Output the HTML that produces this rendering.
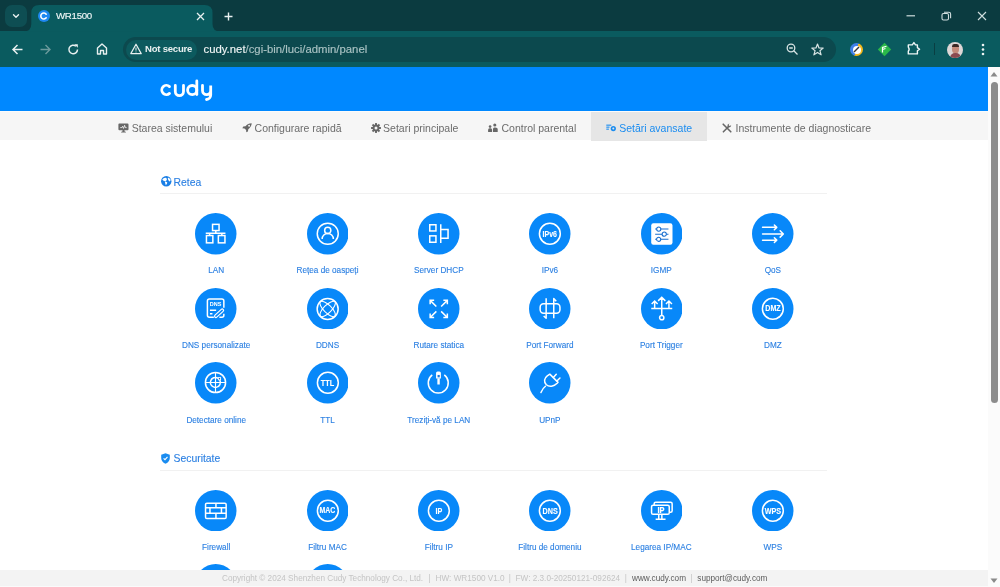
<!DOCTYPE html>
<html><head><meta charset="utf-8">
<style>
*{margin:0;padding:0;box-sizing:border-box}
html,body{width:1000px;height:587px;overflow:hidden;background:#fff;font-family:"Liberation Sans",sans-serif}
.a{position:absolute}
#titlebar{left:0;top:0;width:1000px;height:31px;background:#0b3b40}
#toolbar{left:0;top:31px;width:1000px;height:36px;background:#0a5b5f}
#tabbtn{left:5px;top:5px;width:22px;height:22px;border-radius:7px;background:#0e4e53}
#tab{left:31px;top:5px;width:182px;height:27px;background:#0e5a5e;border-radius:8px 8px 0 0}
.tt{color:#eef5f5;font-size:9.7px;letter-spacing:-0.3px;-webkit-text-stroke:0.15px #eef5f5;white-space:nowrap}
#omni{left:123px;top:36.5px;width:713px;height:25.5px;border-radius:13px;background:#0c494e}
#chip{left:126px;top:39.5px;width:71px;height:20px;border-radius:10px;background:#0c5a5e}
#header{left:0;top:67px;width:988px;height:44px;background:#0088ff}
#nav{left:0;top:111px;width:988px;height:29px;background:#f6f6f6;border-top:1px solid #fbfbfb}
#active{left:591px;top:112px;width:116px;height:28.5px;background:#e6e6e6}
.nt{font-size:10.5px;color:#6c6c6c;white-space:nowrap;line-height:12px}
#scroll{left:988px;top:67px;width:12px;height:520px;background:#fbfbfb}
#thumb{left:991px;top:82px;width:7px;height:321px;border-radius:4px;background:#8c8c8c}
#footer{left:0;top:570px;width:988px;height:17px;background:#f3f3f3;border-bottom:1px solid #fafafa}
.ft{font-size:8.2px;color:#c4c4c4;white-space:nowrap;line-height:10px}
.sec{font-size:10.4px;color:#2d80e2;-webkit-text-stroke:0.12px #2d80e2;white-space:nowrap;line-height:12px}
.line{height:1px;background:#f1f1f1}
.c{width:41.5px;height:41.5px;border-radius:50%;background:#1a8cf5}
.c svg{position:absolute;left:0;top:0;width:41.5px;height:41.5px}
.lb{font-size:8.2px;color:#2d80e2;-webkit-text-stroke:0.12px #2d80e2;white-space:nowrap;line-height:10px;width:120px;text-align:center}
</style></head><body><div id="root" style="position:absolute;left:0;top:0;width:1000px;height:587px;will-change:transform">
<div class="a" id="titlebar"></div>
<div class="a" id="tabbtn"></div>
<svg class="a" style="left:11px;top:11px" width="10" height="10" viewBox="0 0 10 10"><path d="M2.5 3.8 L5 6.3 L7.5 3.8" stroke="#e8f0f0" stroke-width="1.4" fill="none" stroke-linecap="round" stroke-linejoin="round"/></svg>
<div class="a" id="toolbar"></div>
<svg class="a" style="left:0;top:0" width="240" height="32" viewBox="0 0 240 32"><path d="M23.5 31.5 Q31.3 31.5 31.3 24 V13 Q31.3 5 39.3 5 H204.5 Q212.5 5 212.5 13 V24 Q212.5 31.5 220.3 31.5 Z" fill="#0a5b5f"/></svg>
<!-- favicon -->
<div class="a" style="left:38px;top:10px;width:12px;height:12px;border-radius:50%;background:#1e88f0"></div>
<svg class="a" style="left:38px;top:10px" width="12" height="12" viewBox="0 0 12 12"><path d="M8.2 4.2 A3 3 0 1 0 8.2 7.8" stroke="#fff" stroke-width="1.6" fill="none" stroke-linecap="round"/></svg>
<div class="a tt" style="left:56px;top:9.6px;line-height:12px">WR1500</div>
<svg class="a" style="left:196px;top:12px" width="9" height="9" viewBox="0 0 9 9"><path d="M1 1 L8 8 M8 1 L1 8" stroke="#e8f0f0" stroke-width="1.3"/></svg>
<svg class="a" style="left:224px;top:12px" width="9" height="9" viewBox="0 0 9 9"><path d="M4.5 0.5 V8.5 M0.5 4.5 H8.5" stroke="#e8f0f0" stroke-width="1.4"/></svg>
<!-- window controls -->
<svg class="a" style="left:906px;top:11px" width="10" height="10" viewBox="0 0 10 10"><path d="M0.5 4.8 H9" stroke="#d0dede" stroke-width="1.2"/></svg>
<svg class="a" style="left:941px;top:11px" width="11" height="10" viewBox="0 0 11 10"><rect x="1" y="2.5" width="6.5" height="6.5" rx="1.5" stroke="#d0dede" stroke-width="1.1" fill="none"/><path d="M3 1.2 H7.8 Q9.6 1.2 9.6 3 V7.2" stroke="#d0dede" stroke-width="1.1" fill="none"/></svg>
<svg class="a" style="left:977px;top:11px" width="10" height="10" viewBox="0 0 10 10"><path d="M1 1 L9 9 M9 1 L1 9" stroke="#d0dede" stroke-width="1.1"/></svg>
<!-- toolbar icons -->
<svg class="a" style="left:11px;top:43px" width="13" height="13" viewBox="0 0 13 13"><path d="M11.5 6.5 H2 M6.5 2 L2 6.5 L6.5 11" stroke="#e8f0f0" stroke-width="1.5" fill="none"/></svg>
<svg class="a" style="left:39px;top:43px" width="13" height="13" viewBox="0 0 13 13"><path d="M1.5 6.5 H11 M6.5 2 L11 6.5 L6.5 11" stroke="#6c9a9c" stroke-width="1.4" fill="none"/></svg>
<svg class="a" style="left:67px;top:43px" width="13" height="13" viewBox="0 0 13 13"><path d="M10.5 6.5 A4.3 4.3 0 1 1 9 3.2" stroke="#e8f0f0" stroke-width="1.5" fill="none"/><path d="M7.3 1.3 H10.8 V4.8 Z" fill="#e8f0f0"/></svg>
<svg class="a" style="left:95px;top:42px" width="14" height="14" viewBox="0 0 14 14"><path d="M2.5 6 L7 2 L11.5 6 V12 H8.5 V8.5 H5.5 V12 H2.5 Z" stroke="#e8f0f0" stroke-width="1.4" fill="none" stroke-linejoin="round"/></svg>
<div class="a" id="omni"></div>
<div class="a" id="chip"></div>
<svg class="a" style="left:129.5px;top:43px" width="12" height="12" viewBox="0 0 12 12"><path d="M6 1.2 L11.2 10.6 H0.8 Z" stroke="#e8f0f0" stroke-width="1.2" fill="none" stroke-linejoin="round"/><path d="M6 4.5 V7.6 M6 8.6 V9.4" stroke="#e8f0f0" stroke-width="1"/></svg>
<div class="a" style="left:145px;top:42.8px;font-size:9.6px;letter-spacing:-0.25px;line-height:12px;font-weight:bold;color:#e8f0f0;white-space:nowrap">Not secure</div>
<div class="a" style="left:203.5px;top:42.8px;font-size:11.35px;line-height:13px;color:#a9c2c3;-webkit-text-stroke:0.15px #a9c2c3;white-space:nowrap"><span style="color:#f0f5f5;-webkit-text-stroke:0.15px #f0f5f5">cudy.net</span>/cgi-bin/luci/admin/panel</div>
<svg class="a" style="left:786px;top:43px" width="13" height="13" viewBox="0 0 13 13"><circle cx="5" cy="5" r="3.8" stroke="#d8e4e4" stroke-width="1.3" fill="none"/><path d="M7.8 7.8 L11.5 11.5 M3.2 5 H6.8" stroke="#d8e4e4" stroke-width="1.3"/></svg>
<svg class="a" style="left:811px;top:43px" width="13" height="13" viewBox="0 0 13 13"><path d="M6.5 1 L8 5 L12.2 5.1 L8.9 7.7 L10.1 11.8 L6.5 9.4 L2.9 11.8 L4.1 7.7 L0.8 5.1 L5 5 Z" stroke="#d8e4e4" stroke-width="1.2" fill="none" stroke-linejoin="round"/></svg>
<!-- extensions -->
<div class="a" style="left:850px;top:43px;width:13px;height:13px;border-radius:50%;background:conic-gradient(from 20deg,#f4b81c 0 50%,#3f7fe8 50% 100%)"></div>
<div class="a" style="left:852.5px;top:45.5px;width:8px;height:8px;border-radius:50%;background:#fff"></div>
<svg class="a" style="left:852px;top:45px" width="9" height="9" viewBox="0 0 9 9"><path d="M2 7 L7 2" stroke="#333" stroke-width="1.5"/></svg>
<svg class="a" style="left:877px;top:42px" width="15" height="15" viewBox="0 0 15 15"><path d="M7.5 0.8 L14.2 7.5 L7.5 14.2 L0.8 7.5 Z" fill="#2bb84a"/><path d="M5.5 10.5 V5.5 L9.5 4.2 M5.5 7.5 L8.5 6.5" stroke="#fff" stroke-width="1.2" fill="none"/></svg>
<svg class="a" style="left:902px;top:38px" width="22" height="22" viewBox="0 0 22 22"><path d="M6.3 6.9 H10.3 L11.9 4.6 L13.5 6.9 H15.4 V9.6 L17.6 11.2 L15.4 12.8 V15.9 H6.3 V13.3 Q8.0 11.2 6.3 9.1 Z" stroke="#eef6f6" stroke-width="1.4" fill="none" stroke-linejoin="round"/></svg>
<div class="a" style="left:933.8px;top:43.2px;width:1.2px;height:12px;background:#0a3e42"></div>
<div class="a" style="left:947px;top:41.6px;width:16px;height:16px;border-radius:50%;background:#dcd6d6;overflow:hidden"><div class="a" style="left:5px;top:3.5px;width:6.5px;height:8px;border-radius:45%;background:#c48a7a"></div><div class="a" style="left:4.5px;top:2.2px;width:7.5px;height:3px;border-radius:4px 4px 1px 1px;background:#3a2824"></div><div class="a" style="left:2.5px;top:11.5px;width:11px;height:6px;border-radius:5px 5px 0 0;background:#8a4a50"></div></div>
<svg class="a" style="left:980px;top:42px" width="6" height="15" viewBox="0 0 6 15"><circle cx="3" cy="3" r="1.3" fill="#eef4f4"/><circle cx="3" cy="7.5" r="1.3" fill="#eef4f4"/><circle cx="3" cy="12" r="1.3" fill="#eef4f4"/></svg>

<!-- page -->
<div class="a" id="header"></div>
<svg class="a" style="left:158px;top:77px" width="56" height="26" viewBox="0 0 56 26"><g stroke="#fff" stroke-width="2.8" fill="none" stroke-linecap="round"><path d="M11.5 9.6 A4.6 4.6 0 1 0 11.5 16.4"/><path d="M17.3 8.5 V14.5 A4.1 4.1 0 0 0 25.5 14.5 V8.5"/><circle cx="34.2" cy="13.1" r="4.6"/><path d="M38.8 4 V17.5"/><path d="M44.5 8.5 V13.5 A4.1 4.1 0 0 0 52.7 13.5 V8.5 V18 A4.5 4.5 0 0 1 48.5 22.5"/></g></svg>
<div class="a" id="nav"></div>
<div class="a" id="active"></div>
<!-- nav items -->
<svg class="a" style="left:117.5px;top:122.5px" width="11" height="10" viewBox="0 0 11 10"><path d="M1.3 0.4 H9.5 Q10.5 0.4 10.5 1.5 V6.3 Q10.5 7.2 9.6 7.2 H6.4 L6.8 8.8 H7.9 V9.5 H3.1 V8.8 H4.2 L4.6 7.2 H1.4 Q0.4 7.2 0.4 6.3 V1.5 Q0.4 0.4 1.3 0.4 Z" fill="#676767"/><path d="M2.3 4.6 H3.8 L4.6 3.3 L5.5 5.4 L6.6 2.3 L7.3 4.6 H8.6" stroke="#fff" stroke-width="0.8" fill="none"/></svg>
<div class="a nt" style="left:131.7px;top:121.5px">Starea sistemului</div>
<svg class="a" style="left:241.5px;top:122.5px" width="10" height="10" viewBox="0 0 10 10"><path d="M9.7 0.3 C7.0 0.3 5.0 1.5 3.5 3.3 L1.3 3.6 L0.3 5.3 L2.5 5.5 L4.1 7.1 L4.3 9.3 L5.9 8.4 L6.3 6.2 C8.2 4.7 9.7 2.9 9.7 0.3 Z" fill="#676767"/><circle cx="7.1" cy="2.8" r="0.95" fill="#f6f6f6"/></svg>
<div class="a nt" style="left:254.6px;top:121.5px">Configurare rapidă</div>
<svg class="a" style="left:370.5px;top:122.5px" width="10" height="10" viewBox="-5 -5 10 10"><g fill="#676767"><circle r="3.4"/><g id="teeth"><rect x="-1" y="-4.9" width="2" height="2.2"/><rect x="-1" y="2.7" width="2" height="2.2"/><rect x="-4.9" y="-1" width="2.2" height="2"/><rect x="2.7" y="-1" width="2.2" height="2"/></g><use href="#teeth" transform="rotate(45)"/></g><circle r="1.5" fill="#f6f6f6"/></svg>
<div class="a nt" style="left:383.1px;top:121.5px">Setari principale</div>
<svg class="a" style="left:488px;top:122.5px" width="10" height="10" viewBox="0 0 10 10"><g fill="#676767"><circle cx="2.1" cy="3.6" r="1.3"/><path d="M0.1 9.1 V6.9 Q0.1 5.3 1.6 5.3 H2.6 Q4.1 5.3 4.1 6.9 V9.1 Z"/><circle cx="6.8" cy="2.0" r="1.55"/><path d="M5.0 9.1 V5.9 Q5.0 4.4 6.4 4.4 H7.3 Q9.7 4.4 9.7 5.9 V9.1 Z"/></g></svg>
<div class="a nt" style="left:501.5px;top:121.5px">Control parental</div>
<svg class="a" style="left:605.5px;top:123.5px" width="11" height="8" viewBox="0 0 11 8"><g fill="#1a8cf0"><rect x="0.3" y="0.6" width="5" height="1.1"/><rect x="0.3" y="2.6" width="3.2" height="1.1"/><rect x="0.3" y="4.6" width="2.6" height="1.1"/><circle cx="7.3" cy="4.6" r="2.6"/></g><circle cx="7.3" cy="4.6" r="1" fill="#e6e6e6"/></svg>
<div class="a nt" style="left:619.2px;top:121.5px;color:#1a8cf0">Setări avansate</div>
<svg class="a" style="left:721.5px;top:122.5px" width="11" height="10" viewBox="0 0 11 10"><g stroke="#676767" stroke-linecap="round"><path d="M1.2 1.2 L8.8 8.8" stroke-width="1.6"/><path d="M1.4 8.8 L6.4 3.8" stroke-width="1.6"/></g><path d="M5.4 3.4 Q5 1 7.4 0.4 L6.6 2 L7.4 3 L9.2 2.2 Q9 4.8 6.4 4.6 Z" fill="#676767"/></svg>
<div class="a nt" style="left:735.6px;top:121.5px">Instrumente de diagnosticare</div>
<!-- sections -->
<svg class="a" style="left:160.5px;top:176.2px" width="11" height="11" viewBox="0 0 11 11"><circle cx="5.25" cy="5.25" r="5.2" fill="#1a7fe6"/><g fill="#fff"><path d="M1.3 3.4 Q2.6 1.5 4.6 1.7 Q6.2 2.3 6.0 3.5 Q5.0 3.9 5.4 5.1 Q4.4 5.7 3.2 5.1 Q2.0 4.6 1.3 3.4 Z"/><path d="M4.1 5.8 Q5.6 5.5 6.3 6.4 Q6.1 8.0 4.8 9.3 Q4.4 7.6 4.0 6.8 Z"/><path d="M7.0 1.4 Q8.9 2.0 9.7 3.8 Q9.5 5.4 8.2 5.4 Q7.6 4.4 7.2 3.8 Q6.5 2.5 7.0 1.4 Z"/></g></svg>
<div class="a sec" style="left:173.5px;top:176.8px">Retea</div>
<div class="a line" style="left:159.5px;top:193px;width:667px"></div>
<svg class="a" style="left:161px;top:453px" width="9" height="11" viewBox="0 0 9 11"><path d="M4.5 0.2 L8.8 1.8 V5 Q8.8 8.8 4.5 10.8 Q0.2 8.8 0.2 5 V1.8 Z" fill="#1a8cf0"/><path d="M2.6 5.3 L4 6.7 L6.5 3.9" stroke="#fff" stroke-width="1.1" fill="none"/></svg>
<div class="a sec" style="left:173.5px;top:453.3px">Securitate</div>
<div class="a line" style="left:159.5px;top:470px;width:667px"></div>
<svg class="a ic" style="left:195.45px;top:213.15px" width="41.5" height="41.5" viewBox="0 0 41.5 41.5"><circle cx="20.75" cy="20.75" r="20.75" fill="#0888f9"/><g transform="translate(20.75 20.75)"><g stroke="#fff" fill="none" stroke-width="1.5"><rect x="-3.2" y="-9.4" width="6.5" height="6.2"/><path d="M0.05 -3.2 V-0.4 M-10 -0.4 H9.7 M-6.1 -0.4 V1.8 M6.1 -0.4 V1.8"/><rect x="-9.3" y="1.8" width="6.4" height="7.3"/><rect x="2.6" y="1.8" width="6.6" height="7.3"/></g></g></svg>
<div class="a lb" style="left:156.20px;top:266.40px">LAN</div>
<svg class="a ic" style="left:306.75px;top:213.15px" width="41.5" height="41.5" viewBox="0 0 41.5 41.5"><circle cx="20.75" cy="20.75" r="20.75" fill="#0888f9"/><g transform="translate(20.75 20.75)"><g stroke="#fff" fill="none" stroke-width="1.5"><circle r="10.5"/><circle cx="0" cy="-3.3" r="3.1"/><path d="M-5.6 5.3 A5.6 5.6 0 0 1 5.6 5.3"/></g></g></svg>
<div class="a lb" style="left:267.50px;top:266.40px">Rețea de oaspeți</div>
<svg class="a ic" style="left:418.05px;top:213.15px" width="41.5" height="41.5" viewBox="0 0 41.5 41.5"><circle cx="20.75" cy="20.75" r="20.75" fill="#0888f9"/><g transform="translate(20.75 20.75)"><g stroke="#fff" fill="none" stroke-width="1.5" stroke-width="1.55"><rect x="-9.0" y="-9.0" width="6.2" height="6.2"/><rect x="-9.0" y="2.1" width="6.2" height="6.4"/><path d="M2.0 -9.6 V9.3 M2.0 -4.2 H9.3 V4.5 H2.0"/></g></g></svg>
<div class="a lb" style="left:378.80px;top:266.40px">Server DHCP</div>
<svg class="a ic" style="left:529.15px;top:213.15px" width="41.5" height="41.5" viewBox="0 0 41.5 41.5"><circle cx="20.75" cy="20.75" r="20.75" fill="#0888f9"/><g transform="translate(20.75 20.75)"><circle cx="0.1" cy="0" r="10.45" stroke="#fff" fill="none" stroke-width="1.5"/><text x="0.0" y="3.0" text-anchor="middle" font-family="Liberation Sans" font-weight="bold" font-size="8.7" fill="#fff" stroke="#fff" stroke-width="0.12" textLength="14.4" lengthAdjust="spacingAndGlyphs">IPv6</text></g></svg>
<div class="a lb" style="left:489.90px;top:266.40px">IPv6</div>
<svg class="a ic" style="left:640.55px;top:213.15px" width="41.5" height="41.5" viewBox="0 0 41.5 41.5"><circle cx="20.75" cy="20.75" r="20.75" fill="#0888f9"/><g transform="translate(20.75 20.75)"><rect x="-10.55" y="-10.4" width="21.3" height="21.3" rx="2.2" fill="#fff"/><g stroke="#1a6fcf" stroke-width="1.05" fill="#fff"><path d="M-6.6 -4.7 H6.7 M-6.6 0.4 H6.7 M-6.6 5.5 H6.7"/><circle cx="-3.0" cy="-4.7" r="2.1"/><circle cx="2.5" cy="0.4" r="2.1"/><circle cx="-3.1" cy="5.5" r="2.1"/></g></g></svg>
<div class="a lb" style="left:601.30px;top:266.40px">IGMP</div>
<svg class="a ic" style="left:752.15px;top:213.15px" width="41.5" height="41.5" viewBox="0 0 41.5 41.5"><circle cx="20.75" cy="20.75" r="20.75" fill="#0888f9"/><g transform="translate(20.75 20.75)"><g stroke="#fff" fill="none" stroke-width="1.5" stroke-width="1.55" stroke-linecap="round" stroke-linejoin="round"><path d="M-10.2 -6.4 H4 M1.6 -8.8 L4 -6.4 L1.6 -4.0"/><path d="M-10.2 0.2 H10.6 M7.4 -3.0 L10.6 0.2 L7.4 3.4"/><path d="M-10.2 6.4 H4 M1.6 4.0 L4 6.4 L1.6 8.8"/></g></g></svg>
<div class="a lb" style="left:712.90px;top:266.40px">QoS</div>
<svg class="a ic" style="left:195.45px;top:287.55px" width="41.5" height="41.5" viewBox="0 0 41.5 41.5"><circle cx="20.75" cy="20.75" r="20.75" fill="#0888f9"/><g transform="translate(20.75 20.75)"><g stroke="#fff" fill="none" stroke-width="1.5"><path d="M8.1 -1.0 V-7.75 Q8.1 -9.75 6.1 -9.75 H-6.35 Q-8.35 -9.75 -8.35 -7.75 V6.45 Q-8.35 8.45 -6.35 8.45 H-1.9"/><path d="M3.6 8.45 H6.1 Q8.1 8.45 8.1 6.45 V5.0"/><path d="M-5.8 1.5 H0.4 M-5.8 5.0 H-3.3"/><rect x="-5.6" y="-1.35" width="11.2" height="2.7" rx="1.35" transform="translate(3.3 4.5) rotate(-42)" stroke-width="1.2"/></g><text x="-0.25" y="-3.0" text-anchor="middle" font-family="Liberation Sans" font-weight="bold" font-size="6.2" fill="#fff" textLength="11.6" lengthAdjust="spacingAndGlyphs">DNS</text></g></svg>
<div class="a lb" style="left:156.20px;top:340.80px">DNS personalizate</div>
<svg class="a ic" style="left:306.75px;top:287.55px" width="41.5" height="41.5" viewBox="0 0 41.5 41.5"><circle cx="20.75" cy="20.75" r="20.75" fill="#0888f9"/><g transform="translate(20.75 20.75)"><g stroke="#fff" fill="none" stroke-width="1.5"><circle cx="-0.1" cy="0.2" r="10.5"/><g transform="translate(-0.1 0.2)"><ellipse rx="10.2" ry="3.9" transform="rotate(45)" stroke-width="1.05"/><ellipse rx="10.2" ry="3.9" transform="rotate(-45)" stroke-width="1.05"/></g></g></g></svg>
<div class="a lb" style="left:267.50px;top:340.80px">DDNS</div>
<svg class="a ic" style="left:418.05px;top:287.55px" width="41.5" height="41.5" viewBox="0 0 41.5 41.5"><circle cx="20.75" cy="20.75" r="20.75" fill="#0888f9"/><g transform="translate(20.75 20.75)"><g stroke="#fff" fill="none" stroke-width="1.5" stroke-width="1.6" stroke-linejoin="miter" transform="translate(0 0.2)"><path d="M-2.4 -2.4 L-8.6 -8.6 M-8.6 -4.6 V-8.6 H-4.6"/><path d="M2.4 -2.4 L8.6 -8.6 M8.6 -4.6 V-8.6 H4.6"/><path d="M-2.4 2.4 L-8.6 8.6 M-8.6 4.6 V8.6 H-4.6"/><path d="M2.4 2.4 L8.6 8.6 M8.6 4.6 V8.6 H4.6"/></g></g></svg>
<div class="a lb" style="left:378.80px;top:340.80px">Rutare statica</div>
<svg class="a ic" style="left:529.15px;top:287.55px" width="41.5" height="41.5" viewBox="0 0 41.5 41.5"><circle cx="20.75" cy="20.75" r="20.75" fill="#0888f9"/><g transform="translate(20.75 20.75)"><g stroke="#fff" fill="none" stroke-width="1.5" stroke-width="1.4"><rect x="-9.6" y="-5.0" width="19.8" height="9.4" rx="3.4"/><path d="M-3.6 -10.4 V9.5 L-6.1 7.2" stroke-linejoin="round"/><path d="M4.0 9.5 V-10.3 L6.5 -7.6" stroke-linejoin="round"/></g></g></svg>
<div class="a lb" style="left:489.90px;top:340.80px">Port Forward</div>
<svg class="a ic" style="left:640.55px;top:287.55px" width="41.5" height="41.5" viewBox="0 0 41.5 41.5"><circle cx="20.75" cy="20.75" r="20.75" fill="#0888f9"/><g transform="translate(20.75 20.75)"><g stroke="#fff" fill="none" stroke-width="1.5" stroke-width="1.4"><path d="M-10.5 -0.2 H10.5 M0 -0.2 V6.8 M0 -0.2 V-11.5 M-3.6 -7.9 L0 -11.5 L3.6 -7.9 M-7.1 -0.2 V-7.8 M-10.1 -4.8 L-7.1 -7.8 L-4.1 -4.8 M7.2 -0.2 V-7.8 M4.2 -4.8 L7.2 -7.8 L10.2 -4.8"/><circle cx="0" cy="8.9" r="2.15"/></g></g></svg>
<div class="a lb" style="left:601.30px;top:340.80px">Port Trigger</div>
<svg class="a ic" style="left:752.15px;top:287.55px" width="41.5" height="41.5" viewBox="0 0 41.5 41.5"><circle cx="20.75" cy="20.75" r="20.75" fill="#0888f9"/><g transform="translate(20.75 20.75)"><circle cx="0.1" cy="0" r="10.45" stroke="#fff" fill="none" stroke-width="1.5"/><text x="0.2" y="2.6" text-anchor="middle" font-family="Liberation Sans" font-weight="bold" font-size="8.9" fill="#fff" stroke="#fff" stroke-width="0.12" textLength="15.4" lengthAdjust="spacingAndGlyphs">DMZ</text></g></svg>
<div class="a lb" style="left:712.90px;top:340.80px">DMZ</div>
<svg class="a ic" style="left:195.45px;top:362.35px" width="41.5" height="41.5" viewBox="0 0 41.5 41.5"><circle cx="20.75" cy="20.75" r="20.75" fill="#0888f9"/><g transform="translate(20.75 20.75)"><g stroke="#fff" fill="none" stroke-width="1.5" transform="translate(-0.25 -0.25)"><circle r="10.1"/><path d="M4.2 -2.6 A5.0 5.0 0 1 1 2.7 -4.2" stroke-width="1.5"/><path d="M0 -10.3 V10.3 M-10.3 0 H10.3" stroke-width="1.1"/><circle cx="0" cy="0" r="1.1" fill="#fff" stroke="none"/><rect x="2.9" y="-4.9" width="2.2" height="2.2" stroke-width="0.9" fill="#1a5fb8"/></g></g></svg>
<div class="a lb" style="left:156.20px;top:415.60px">Detectare online</div>
<svg class="a ic" style="left:306.75px;top:362.35px" width="41.5" height="41.5" viewBox="0 0 41.5 41.5"><circle cx="20.75" cy="20.75" r="20.75" fill="#0888f9"/><g transform="translate(20.75 20.75)"><circle cx="0.1" cy="0" r="10.45" stroke="#fff" fill="none" stroke-width="1.5"/><text x="-0.2" y="2.75" text-anchor="middle" font-family="Liberation Sans" font-weight="bold" font-size="9.0" fill="#fff" stroke="#fff" stroke-width="0.12" textLength="13.4" lengthAdjust="spacingAndGlyphs">TTL</text></g></svg>
<div class="a lb" style="left:267.50px;top:415.60px">TTL</div>
<svg class="a ic" style="left:418.05px;top:362.35px" width="41.5" height="41.5" viewBox="0 0 41.5 41.5"><circle cx="20.75" cy="20.75" r="20.75" fill="#0888f9"/><g transform="translate(20.75 20.75)"><g stroke="#fff" fill="none" stroke-width="1.5" stroke-width="1.5"><path d="M-6.5 -7.8 A10.0 10.0 0 1 0 5.5 -7.8"/></g><path d="M-2.7 -4.2 V-9.8 Q-2.7 -11.3 -1.2 -11.3 H0.65 Q2.15 -11.3 2.15 -9.8 V-4.2 Z" fill="#fff"/><rect x="-1.4" y="-4.4" width="2.4" height="6.15" fill="#fff"/><rect x="-1.2" y="-7.8" width="2.2" height="2.4" fill="#1a78e0"/></g></svg>
<div class="a lb" style="left:378.80px;top:415.60px">Treziți-vă pe LAN</div>
<svg class="a ic" style="left:529.15px;top:362.35px" width="41.5" height="41.5" viewBox="0 0 41.5 41.5"><circle cx="20.75" cy="20.75" r="20.75" fill="#0888f9"/><g transform="translate(20.75 20.75)"><g stroke="#fff" fill="none" stroke-width="1.5" stroke-width="1.5" stroke-linecap="round" stroke-linejoin="round"><path d="M-8.8 9.7 Q-7.2 5.6 -4.3 3.5"/><path d="M0.06 -8.6 L8.3 -0.4 L7.4 0.6 C4.2 3.9 -0.6 4.6 -3.4 2.0 C-6.2 -0.8 -5.6 -4.6 -2.5 -6.9 Z"/><path d="M3.6 -5.2 L6.5 -8.4 M7.2 -1.8 L10.2 -4.7"/></g></g></svg>
<div class="a lb" style="left:489.90px;top:415.60px">UPnP</div>
<svg class="a ic" style="left:195.45px;top:489.65px" width="41.5" height="41.5" viewBox="0 0 41.5 41.5"><circle cx="20.75" cy="20.75" r="20.75" fill="#0888f9"/><g transform="translate(20.75 20.75)"><g stroke="#fff" fill="none" stroke-width="1.5" stroke-width="1.6"><rect x="-10.2" y="-7.5" width="20.6" height="15.2" rx="1.3"/></g><g stroke="#fff" fill="none" stroke-width="1.5" stroke-width="1.3"><path d="M-10.2 -2.9 H10.4 M-10.2 2.6 H10.4 M0.2 -7.5 V-2.9 M-5.8 -2.9 V2.6 M5.7 -2.9 V2.6 M0.2 2.6 V7.7"/></g></g></svg>
<div class="a lb" style="left:156.20px;top:542.90px">Firewall</div>
<svg class="a ic" style="left:306.75px;top:489.65px" width="41.5" height="41.5" viewBox="0 0 41.5 41.5"><circle cx="20.75" cy="20.75" r="20.75" fill="#0888f9"/><g transform="translate(20.75 20.75)"><circle cx="0.1" cy="0" r="10.45" stroke="#fff" fill="none" stroke-width="1.5"/><text x="-0.3" y="2.65" text-anchor="middle" font-family="Liberation Sans" font-weight="bold" font-size="8.8" fill="#fff" stroke="#fff" stroke-width="0.12" textLength="15.8" lengthAdjust="spacingAndGlyphs">MAC</text></g></svg>
<div class="a lb" style="left:267.50px;top:542.90px">Filtru MAC</div>
<svg class="a ic" style="left:418.05px;top:489.65px" width="41.5" height="41.5" viewBox="0 0 41.5 41.5"><circle cx="20.75" cy="20.75" r="20.75" fill="#0888f9"/><g transform="translate(20.75 20.75)"><circle cx="0.1" cy="0" r="10.45" stroke="#fff" fill="none" stroke-width="1.5"/><text x="0.1" y="3.05" text-anchor="middle" font-family="Liberation Sans" font-weight="bold" font-size="8.9" fill="#fff" stroke="#fff" stroke-width="0.12" textLength="6.8" lengthAdjust="spacingAndGlyphs">IP</text></g></svg>
<div class="a lb" style="left:378.80px;top:542.90px">Filtru IP</div>
<svg class="a ic" style="left:529.15px;top:489.65px" width="41.5" height="41.5" viewBox="0 0 41.5 41.5"><circle cx="20.75" cy="20.75" r="20.75" fill="#0888f9"/><g transform="translate(20.75 20.75)"><circle cx="0.1" cy="0" r="10.45" stroke="#fff" fill="none" stroke-width="1.5"/><text x="0.4" y="2.9" text-anchor="middle" font-family="Liberation Sans" font-weight="bold" font-size="8.9" fill="#fff" stroke="#fff" stroke-width="0.12" textLength="15.2" lengthAdjust="spacingAndGlyphs">DNS</text></g></svg>
<div class="a lb" style="left:489.90px;top:542.90px">Filtru de domeniu</div>
<svg class="a ic" style="left:640.55px;top:489.65px" width="41.5" height="41.5" viewBox="0 0 41.5 41.5"><circle cx="20.75" cy="20.75" r="20.75" fill="#0888f9"/><g transform="translate(20.75 20.75)"><g stroke="#fff" fill="none" stroke-width="1.5" stroke-width="1.5"><path d="M-7.6 -5.55 V-7.0 Q-7.6 -8.45 -6.1 -8.45 H8.9 Q10.4 -8.45 10.4 -7.0 V0.0 Q10.4 1.45 8.9 1.45 H7.5"/><rect x="-10.2" y="-5.55" width="17.7" height="9.15" rx="1.6"/><path d="M-3.0 3.6 V8.2 M0.1 3.6 V8.2 M-6.1 8.5 H3.8"/></g><text x="-0.78" y="2.3" text-anchor="middle" font-family="Liberation Sans" font-weight="bold" font-size="8.2" fill="#fff" stroke="#fff" stroke-width="0.2" textLength="7.0" lengthAdjust="spacingAndGlyphs">IP</text></g></svg>
<div class="a lb" style="left:601.30px;top:542.90px">Legarea IP/MAC</div>
<svg class="a ic" style="left:752.15px;top:489.65px" width="41.5" height="41.5" viewBox="0 0 41.5 41.5"><circle cx="20.75" cy="20.75" r="20.75" fill="#0888f9"/><g transform="translate(20.75 20.75)"><circle cx="0.1" cy="0" r="10.45" stroke="#fff" fill="none" stroke-width="1.5"/><text x="0.1" y="2.9" text-anchor="middle" font-family="Liberation Sans" font-weight="bold" font-size="8.9" fill="#fff" stroke="#fff" stroke-width="0.12" textLength="16.4" lengthAdjust="spacingAndGlyphs">WPS</text></g></svg>
<div class="a lb" style="left:712.90px;top:542.90px">WPS</div>
<svg class="a ic" style="left:195.45px;top:564.25px" width="41.5" height="41.5" viewBox="0 0 41.5 41.5"><circle cx="20.75" cy="20.75" r="20.75" fill="#0888f9"/><g transform="translate(20.75 20.75)"></g></svg>
<svg class="a ic" style="left:306.75px;top:564.25px" width="41.5" height="41.5" viewBox="0 0 41.5 41.5"><circle cx="20.75" cy="20.75" r="20.75" fill="#0888f9"/><g transform="translate(20.75 20.75)"></g></svg>
<!-- footer -->
<div class="a" id="footer"></div>
<div class="a ft" style="left:222px;top:574.1px">Copyright © 2024 Shenzhen Cudy Technology Co., Ltd.</div>
<div class="a ft" style="left:428.5px;top:574.1px">|</div>
<div class="a ft" style="left:435.6px;top:574.1px">HW: WR1500 V1.0</div>
<div class="a ft" style="left:508.8px;top:574.1px">|</div>
<div class="a ft" style="left:515.6px;top:574.1px">FW: 2.3.0-20250121-092624</div>
<div class="a ft" style="left:624.8px;top:574.1px">|</div>
<div class="a ft" style="left:632px;top:574.1px;color:#5c5c5c">www.cudy.com</div>
<div class="a ft" style="left:690.4px;top:574.1px">|</div>
<div class="a ft" style="left:697.3px;top:574.1px;color:#5c5c5c">support@cudy.com</div>
<!-- scrollbar -->
<div class="a" id="scroll"></div>
<svg class="a" style="left:989px;top:70px" width="10" height="8" viewBox="0 0 10 8"><path d="M1.5 6.5 L5 2 L8.5 6.5 Z" fill="#8a8a8a"/></svg>
<div class="a" id="thumb"></div>
<svg class="a" style="left:989px;top:577px" width="10" height="8" viewBox="0 0 10 8"><path d="M1.5 1.5 L5 6 L8.5 1.5 Z" fill="#8a8a8a"/></svg>
</div></body></html>
